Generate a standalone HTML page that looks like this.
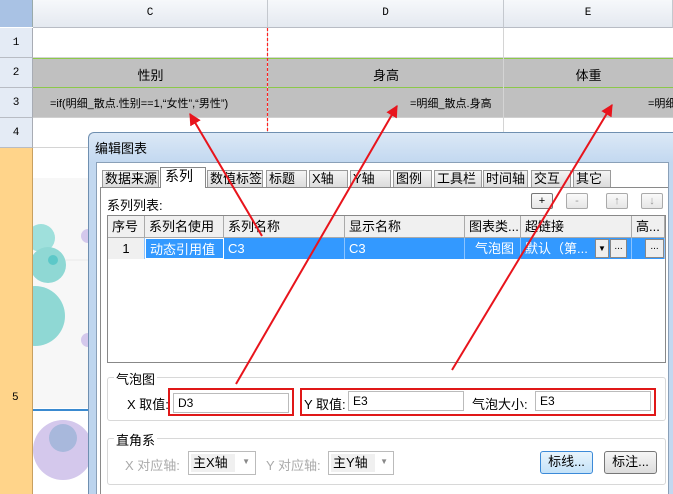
<!DOCTYPE html>
<html><head><meta charset="utf-8"><style>
*{box-sizing:border-box;margin:0;padding:0}
html,body{width:673px;height:494px;overflow:hidden}
body{background:#fff;position:relative;font-family:"Liberation Sans","Noto Sans CJK SC",sans-serif;font-size:12px;color:#000}
.a{position:absolute}
.hdr{background:linear-gradient(#f6f8fb,#e4e9f0);border-right:1px solid #c4c8ce;border-bottom:1px solid #b8bcc4;text-align:center;line-height:27px;font-family:"Liberation Mono",monospace;font-size:11px}
.rh{background:#e4ebf5;border-bottom:1px solid #b8bcc4;border-right:1px solid #a8acb4;text-align:center;font-size:11px;font-family:"Liberation Mono",monospace}
.c{text-align:center;font-size:13px}
.tab{position:absolute;top:170px;height:17px;border:1px solid #9a9a9a;border-bottom:none;background:linear-gradient(#f4f4f4,#dcdcdc);font-size:13px;line-height:16px;padding-left:2px;white-space:nowrap;overflow:hidden}
.th{position:absolute;top:216px;height:22px;border-right:1px solid #aaa;border-bottom:1px solid #aaa;background:#f0f0f0;font-size:13px;line-height:22px;padding-left:4px;white-space:nowrap;overflow:hidden}
.td{position:absolute;top:238px;height:21px;background:#3399ff;color:#fff;border-right:1px solid #8cc4ff;font-size:13px;line-height:22px;padding-left:4px;white-space:nowrap;overflow:hidden}
.sb{position:absolute;top:193px;width:22px;height:16px;border:1px solid #aaa;border-radius:2px;background:linear-gradient(#fafafa,#e6e6e6);text-align:center;font-size:11px;line-height:14px;color:#999}
.inp{position:absolute;height:20px;border:1px solid #bbb;background:#fff;font-size:12px;line-height:18px;padding-left:4px}
</style></head><body>
<div class="a" style="left:0;top:0;width:33px;height:27px;background:#a9c2e4;border-right:1px solid #9aa"></div>
<div class="a hdr" style="left:33px;top:0;width:235px;height:28px">C</div>
<div class="a hdr" style="left:268px;top:0;width:236px;height:28px">D</div>
<div class="a hdr" style="left:504px;top:0;width:169px;height:28px">E</div>
<div class="a rh" style="left:0;top:28px;width:33px;height:30px;line-height:30px">1</div>
<div class="a rh" style="left:0;top:58px;width:33px;height:30px;line-height:30px">2</div>
<div class="a rh" style="left:0;top:88px;width:33px;height:30px;line-height:30px">3</div>
<div class="a rh" style="left:0;top:118px;width:33px;height:30px;line-height:30px">4</div>
<div class="a" style="left:0;top:148px;width:33px;height:346px;background:#ffd48a;border-right:1px solid #c8a060"><span style="position:absolute;left:12px;top:243px;line-height:14px;font-size:11px;font-family:'Liberation Mono',monospace">5</span></div>
<div class="a" style="left:33px;top:28px;width:640px;height:30px;border-bottom:1px solid #d4d4d4"></div>
<div class="a" style="left:33px;top:58px;width:640px;height:30px;background:#c0c0c0;border-top:1px solid #8cc84a;border-bottom:1px solid #8cc84a"></div>
<div class="a c" style="left:33px;top:65px;width:235px">性别</div>
<div class="a c" style="left:268px;top:65px;width:236px">身高</div>
<div class="a c" style="left:504px;top:65px;width:169px">体重</div>
<div class="a" style="left:33px;top:88px;width:640px;height:30px;background:#c0c0c0;border-bottom:1px solid #d0d0d0"></div>
<div class="a" style="left:50px;top:95px;font-size:11px;white-space:nowrap">=if(明细_散点.性别==1,“女性”,“男性”)</div>
<div class="a" style="left:410px;top:95px;font-size:11px;white-space:nowrap">=明细_散点.身高</div>
<div class="a" style="left:648px;top:95px;width:25px;overflow:hidden;font-size:11px;white-space:nowrap">=明细</div>
<div class="a" style="left:33px;top:118px;width:640px;height:30px;border-bottom:1px solid #d4d4d4"></div>
<div class="a" style="left:267px;top:28px;width:1px;height:120px;background:#d4d4d4"></div>
<div class="a" style="left:503px;top:28px;width:1px;height:120px;background:#d4d4d4"></div>
<svg class="a" style="left:266px;top:28px" width="3" height="110"><line x1="1.5" y1="0" x2="1.5" y2="110" stroke="#ff2020" stroke-width="1.2" stroke-dasharray="3,2"/></svg>
<svg class="a" style="left:33px;top:148px" width="56" height="346">
<rect x="0" y="30" width="56" height="230" fill="#f7f7f7"/>
<line x1="0" y1="112" x2="56" y2="112" stroke="#e8e8e8"/>
<line x1="0" y1="262" x2="56" y2="262" stroke="#3a8ad0" stroke-width="2"/>
<circle cx="8" cy="90" r="14" fill="#9fe0dc"/><circle cx="15" cy="117" r="18" fill="#8fd8d4"/><circle cx="20" cy="112" r="5" fill="#5cc8c8"/><circle cx="2" cy="168" r="30" fill="#8fd8d4"/>
<circle cx="55" cy="88" r="7" fill="#d4c8ec"/><circle cx="55" cy="192" r="7" fill="#d4c8ec"/>
<circle cx="30" cy="302" r="30" fill="#d4c8ec"/><circle cx="30" cy="290" r="14" fill="#a8b8dc"/>
</svg>
<div class="a" style="left:88px;top:132px;width:585px;height:362px;border:1px solid #6f8fb0;border-right:none;border-bottom:none;border-radius:6px 0 0 0;background:linear-gradient(#dbe8f6,#c2d8f0 30px,#bcd4ee);"></div>
<div class="a" style="left:95px;top:138px;font-size:13px">编辑图表</div>
<div class="a" style="left:96px;top:162px;width:577px;height:332px;background:#fff;border:1px solid #8aa0b8;border-right:none;border-bottom:none"></div>
<div class="tab" style="left:102px;width:57px">数据来源</div>
<div class="tab" style="left:160px;top:167px;height:21px;width:46px;background:#fff;border-color:#888;z-index:2;font-size:14px;padding-left:4px">系列</div>
<div class="tab" style="left:207px;width:56px">数值标签</div>
<div class="tab" style="left:266px;width:41px">标题</div>
<div class="tab" style="left:309px;width:39px">X轴</div>
<div class="tab" style="left:350px;width:41px">Y轴</div>
<div class="tab" style="left:393px;width:39px">图例</div>
<div class="tab" style="left:434px;width:48px">工具栏</div>
<div class="tab" style="left:483px;width:45px">时间轴</div>
<div class="tab" style="left:531px;width:40px">交互</div>
<div class="tab" style="left:573px;width:38px">其它</div>
<div class="a" style="left:100px;top:187px;width:573px;height:307px;border-top:1px solid #8a8a8a;border-left:1px solid #8a8a8a;background:#fff"></div>
<div class="a" style="left:668px;top:162px;width:5px;height:332px;background:#c2d8f0;border-left:1px solid #8aa0b8"></div>
<div class="a" style="left:107px;top:195px;font-size:13px">系列列表:</div>
<div class="sb" style="left:531px;color:#000;border-color:#777">+</div>
<div class="sb" style="left:566px">-</div>
<div class="sb" style="left:606px">↑</div>
<div class="sb" style="left:641px">↓</div>
<div class="a" style="left:107px;top:215px;width:559px;height:148px;border:1px solid #888;background:#fff"></div>
<div class="th" style="left:108px;width:37px">序号</div>
<div class="th" style="left:145px;width:79px">系列名使用</div>
<div class="th" style="left:224px;width:121px">系列名称</div>
<div class="th" style="left:345px;width:120px">显示名称</div>
<div class="th" style="left:465px;width:56px">图表类...</div>
<div class="th" style="left:521px;width:111px">超链接</div>
<div class="th" style="left:632px;width:33px">高...</div>
<div class="td" style="left:108px;width:37px;background:#f0f0f0;color:#000;text-align:center;padding:0">1</div>
<div class="td" style="left:145px;width:79px;border:1px solid #fff">动态引用值</div>
<div class="td" style="left:224px;width:121px">C3</div>
<div class="td" style="left:345px;width:120px">C3</div>
<div class="td" style="left:465px;width:56px;text-align:center">气泡图</div>
<div class="td" style="left:521px;width:111px">默认（第...</div>
<div class="td" style="left:632px;width:33px;padding:0"></div>
<div class="a" style="left:595px;top:239px;width:14px;height:19px;background:#eee;border:1px solid #888;font-size:8px;text-align:center;line-height:18px">▼</div>
<div class="a" style="left:610px;top:239px;width:17px;height:19px;background:#eee;border:1px solid #888;font-size:10px;text-align:center;line-height:14px">...</div>
<div class="a" style="left:645px;top:239px;width:19px;height:19px;background:#eee;border:1px solid #888;font-size:10px;text-align:center;line-height:14px">...</div>
<div class="a" style="left:107px;top:377px;width:559px;height:44px;border:1px solid #d8d8d8;border-radius:3px"></div>
<div class="a" style="left:114px;top:369px;background:#fff;padding:0 2px;font-size:13px">气泡图</div>
<div class="a" style="left:127px;top:394px;font-size:13px">X 取值:</div>
<div class="a" style="left:168px;top:388px;width:126px;height:28px;border:2px solid #e01818"></div>
<div class="inp" style="left:173px;top:393px;width:116px">D3</div>
<div class="a" style="left:300px;top:388px;width:356px;height:28px;border:2px solid #e01818"></div>
<div class="a" style="left:304px;top:394px;font-size:13px">Y 取值:</div>
<div class="inp" style="left:348px;top:391px;width:116px">E3</div>
<div class="a" style="left:472px;top:394px;font-size:13px">气泡大小:</div>
<div class="inp" style="left:535px;top:391px;width:116px">E3</div>
<div class="a" style="left:107px;top:438px;width:559px;height:47px;border:1px solid #d8d8d8;border-radius:3px"></div>
<div class="a" style="left:114px;top:430px;background:#fff;padding:0 2px;font-size:13px">直角系</div>
<div class="a" style="left:125px;top:455px;font-size:13px;color:#aaa">X 对应轴:</div>
<div class="a" style="left:188px;top:451px;width:68px;height:24px;border:1px solid #bbb;background:#fff"><div style="margin:2px;width:44px;height:18px;background:#f0f0f0;font-size:13px;line-height:18px;padding-left:2px">主X轴</div><span style="position:absolute;right:5px;top:5px;font-size:8px;color:#888">▼</span></div>
<div class="a" style="left:266px;top:455px;font-size:13px;color:#aaa">Y 对应轴:</div>
<div class="a" style="left:328px;top:451px;width:66px;height:24px;border:1px solid #bbb;background:#fff"><div style="margin:2px;width:44px;height:18px;background:#f0f0f0;font-size:13px;line-height:18px;padding-left:2px">主Y轴</div><span style="position:absolute;right:5px;top:5px;font-size:8px;color:#888">▼</span></div>
<div class="a" style="left:540px;top:451px;width:53px;height:23px;border:1px solid #3c8ad8;border-radius:3px;background:linear-gradient(#e8f4fc,#c4e2f8);font-size:13px;text-align:center;line-height:20px">标线...</div>
<div class="a" style="left:604px;top:451px;width:53px;height:23px;border:1px solid #777;border-radius:3px;background:linear-gradient(#f6f6f6,#dcdcdc);font-size:13px;text-align:center;line-height:20px">标注...</div>
<svg class="a" style="left:0;top:0" width="673" height="494">
<defs><marker id="n" viewBox="0 0 10 10" markerWidth="12" markerHeight="12" refX="9" refY="5" orient="auto" markerUnits="userSpaceOnUse"><path d="M0,0 L10,5 L0,10 z" fill="#e8141c"/></marker></defs>
<g stroke="#e8141c" stroke-width="2" fill="none">
<line x1="262" y1="236" x2="190" y2="114" marker-end="url(#n)"/>
<line x1="236" y1="384" x2="397" y2="106" marker-end="url(#n)"/>
<line x1="452" y1="370" x2="612" y2="105" marker-end="url(#n)"/>
</g></svg>
</body></html>
